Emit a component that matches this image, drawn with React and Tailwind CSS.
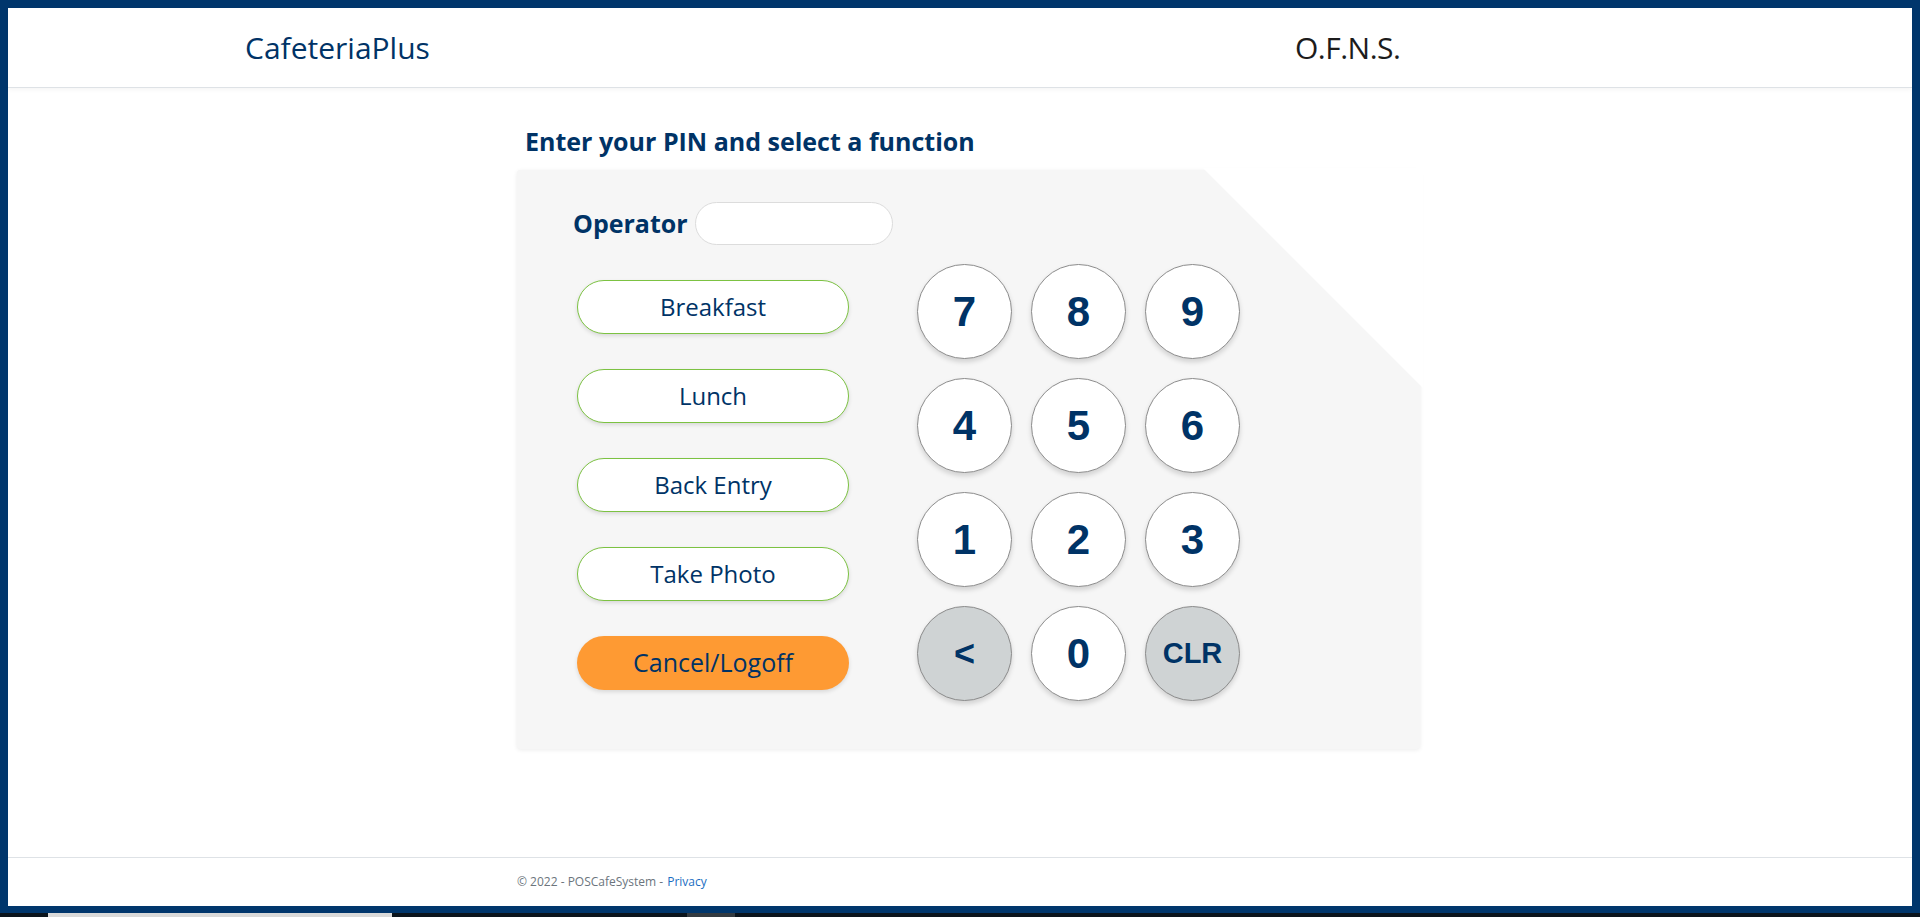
import React, { useState } from 'react';

const navy = 'text-[#003366]';

const functions = ['Breakfast', 'Lunch', 'Back Entry', 'Take Photo'];
const keys = ['7', '8', '9', '4', '5', '6', '1', '2', '3', '<', '0', 'CLR'];

const App = () => {
  const [pin, setPin] = useState('');

  const press = (k) => {
    if (k === 'CLR') setPin('');
    else if (k === '<') setPin(p => p.slice(0, -1));
    else setPin(p => p + k);
  };

  return (
    <div className="h-[917px] w-[1920px] flex flex-col bg-[#0b141c] font-['Open_Sans',sans-serif]">
      {/* Frame */}
      <div className="h-[913px] border-[8px] border-b-[7px] border-[#00366c] bg-white flex flex-col">
        {/* Header */}
        <header className="h-[80px] shrink-0 flex items-center border-b border-[#dee2e6] shadow-[0_2px_4px_rgba(0,0,0,0.04)]">
          <div className="w-[1050px] pl-[237px] text-[30px] text-[#003366] leading-none">CafeteriaPlus</div>
          <div className="pl-[237px] text-[30px] text-[#1c1c1c] leading-none tracking-[-0.5px]">O.F.N.S.</div>
        </header>

        {/* Main */}
        <main className="flex-1 flex flex-col pl-[509px] pt-[41px]">
          <h1 className={`pl-[8px] text-[25px] font-bold leading-none ${navy}`}>Enter your PIN and select a function</h1>

          <div className="relative mt-[16px] w-[903px] h-[579px] bg-[#f6f6f6] rounded-[3px] shadow-[0_1px_4px_rgba(0,0,0,0.08)] pl-[56px] pt-[32px]">
            {/* cut corner */}
            <div className="absolute -top-[2px] -right-[3px] w-0 h-0 border-t-[220px] border-l-[220px] border-t-white border-l-transparent"></div>

            <div className="relative flex items-center gap-[7px]">
              <label className={`text-[25px] font-bold ${navy}`}>Operator</label>
              <input
                type="password"
                value={pin}
                readOnly
                className="w-[198px] h-[43px] bg-white rounded-full border border-[#dcdcdc] px-4 outline-none"
              />
            </div>

            <div className="relative flex mt-[19px]">
              <div className="flex flex-col gap-[35px] mt-[16px] ml-[4px] w-[272px]">
                {functions.map(f => (
                  <button
                    key={f}
                    className={`h-[54px] rounded-full bg-white border border-[#7cc242] shadow-[0_2px_4px_rgba(0,0,0,0.12)] text-[24px] font-medium ${navy}`}
                  >
                    {f}
                  </button>
                ))}
                <button className={`h-[54px] rounded-full bg-[#fe9a33] shadow-[0_2px_4px_rgba(0,0,0,0.12)] text-[25px] font-medium ${navy}`}>
                  Cancel/Logoff
                </button>
              </div>

              <div className="ml-[68px] grid grid-cols-[repeat(3,95px)] gap-[19px] font-['Liberation_Sans',Arial,sans-serif]">
                {keys.map(k => (
                  <button
                    key={k}
                    onClick={() => press(k)}
                    className={`w-[95px] h-[95px] rounded-full border border-[#8c8c8c] shadow-[0_3px_5px_rgba(0,0,0,0.15)] flex items-center justify-center font-bold ${navy} ${k === '<' || k === 'CLR' ? 'bg-[#cfd3d4]' : 'bg-white'} ${k === 'CLR' ? 'text-[29px]' : k === '<' ? 'text-[36px]' : 'text-[42px]'}`}
                  >
                    {k}
                  </button>
                ))}
              </div>
            </div>
          </div>
        </main>

        {/* Footer */}
        <footer className="h-[49px] shrink-0 border-t border-[#dee2e6] flex items-center pl-[509px] text-[12px] text-[#6c757d]">
          © 2022 - POSCafeSystem - <a className="ml-1 text-[#1b6ec2]">Privacy</a>
        </footer>
      </div>

      {/* taskbar strip */}
      <div className="h-[4px] flex">
        <div className="w-[48px]"></div>
        <div className="w-[344px] bg-[#d9d9d9]"></div>
        <div className="w-[295px]"></div>
        <div className="w-[48px] bg-[#333a40]"></div>
      </div>
    </div>
  );
};

export default App;
